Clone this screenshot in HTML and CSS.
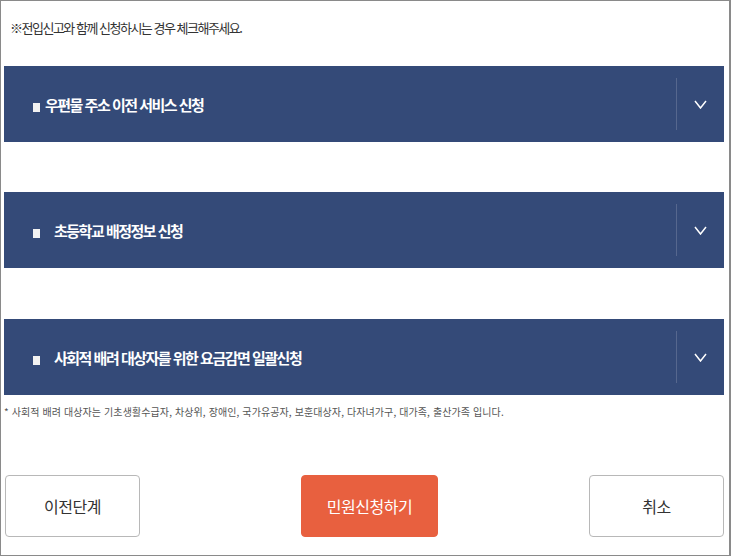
FILE: index.html
```html
<!DOCTYPE html>
<html lang="ko">
<head>
    <meta charset="UTF-8">
    <meta name="viewport" content="width=device-width, initial-scale=1.0">
    <title>전입신고 부가 신청</title>
    <link rel="stylesheet" href="styles.css">
</head>
<body>
    <div class="frame">
        <p class="notice">※전입신고와 함께 신청하시는 경우 체크해주세요.</p>

        <div class="panel">
            <div class="panel-title"><span class="bullet tight"></span>우편물 주소 이전 서비스 신청</div>
            <div class="panel-toggle">
                <svg width="13" height="9" viewBox="0 0 13 9"><path d="M1 1 L6.5 8 L12 1" fill="none" stroke="#fff" stroke-width="1.5"/></svg>
            </div>
        </div>

        <div class="panel">
            <div class="panel-title"><span class="bullet"></span>초등학교 배정정보 신청</div>
            <div class="panel-toggle">
                <svg width="13" height="9" viewBox="0 0 13 9"><path d="M1 1 L6.5 8 L12 1" fill="none" stroke="#fff" stroke-width="1.5"/></svg>
            </div>
        </div>

        <div class="panel last">
            <div class="panel-title"><span class="bullet"></span>사회적 배려 대상자를 위한 요금감면 일괄신청</div>
            <div class="panel-toggle">
                <svg width="13" height="9" viewBox="0 0 13 9"><path d="M1 1 L6.5 8 L12 1" fill="none" stroke="#fff" stroke-width="1.5"/></svg>
            </div>
        </div>
        <p class="footnote">* 사회적 배려 대상자는 기초생활수급자, 차상위, 장애인, 국가유공자, 보훈대상자, 다자녀가구, 대가족, 출산가족 입니다.</p>

        <div class="actions">
            <button class="btn">이전단계</button>
            <button class="btn btn-primary">민원신청하기</button>
            <button class="btn btn-cancel">취소</button>
        </div>
    </div>
</body>
</html>
```

FILE: styles.css
```css
body {
    margin: 0;
    font-family: "Noto Sans CJK KR", "Noto Sans", sans-serif;
    color: #333;
    background: #fff;
}
.frame {
    width: 731px;
    height: 556px;
    box-sizing: border-box;
    border: 1px solid #8a8a8a;
    border-right-width: 2px;
    padding: 0 5px 0 3px;
    display: flex;
    flex-direction: column;
}
.notice {
    margin: 16px 0 0 6px;
    height: 22px;
    line-height: 22px;
    font-size: 13px;
    letter-spacing: -1.5px;
    color: #333;
}
.panel {
    height: 76px;
    background-color: #344a78;
    display: flex;
    align-items: center;
    margin-top: 50px;
}
.notice + .panel {
    margin-top: 27px;
}
.panel.last {
    margin-top: 51px;
}
.panel-title {
    flex: 1;
    padding-left: 29px;
    color: #fff;
    font-size: 15px;
    font-weight: 700;
    letter-spacing: -1.5px;
    display: flex;
    align-items: center;
}
.bullet {
    display: inline-block;
    width: 7px;
    height: 9px;
    background: #f2f2f2;
    margin-right: 14px;
    margin-top: 6px;
}
.bullet.tight {
    margin-right: 5px;
}
.panel-toggle {
    width: 47px;
    height: 52px;
    border-left: 1px solid #56678e;
    display: flex;
    align-items: center;
    justify-content: center;
}
.footnote {
    margin: 9px 0 0 0;
    font-size: 10px;
    letter-spacing: 0.1px;
    color: #555;
}
.actions {
    display: flex;
    margin-top: 56px;
    padding-left: 1px;
}
.btn {
    width: 135px;
    height: 62px;
    border: 1px solid #b8b8b8;
    border-radius: 4px;
    background: #fff;
    font-family: inherit;
    font-size: 16px;
    color: #333;
    letter-spacing: -0.5px;
}
.btn-primary {
    width: 137px;
    margin-left: 161px;
    background: #e8603f;
    border-color: #e8603f;
    color: #fff;
}
.btn-cancel {
    margin-left: auto;
}
```
